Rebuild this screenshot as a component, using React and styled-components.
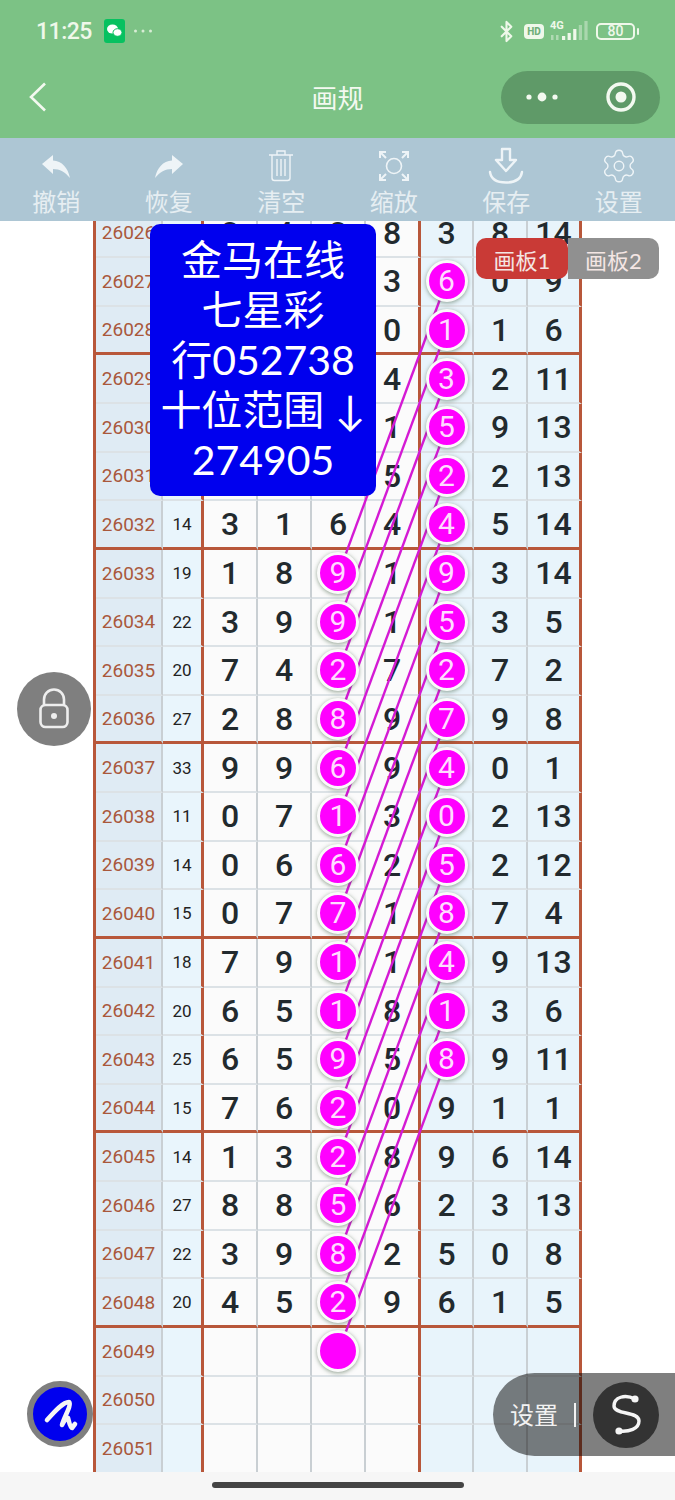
import React from "react";
import styled, { createGlobalStyle } from "styled-components";
import { Settings, Bluetooth } from "lucide-react";

const CJK = `"Noto Sans CJK SC", sans-serif`;
const NUM = `Roboto, "Noto Sans CJK SC", sans-serif`;
const ROW_H = 48.64;

const GlobalStyle = createGlobalStyle`
  html, body { margin: 0; padding: 0; background: #fff; }
  * { box-sizing: border-box; }
`;

const Page = styled.div`
  position: relative;
  width: 675px;
  height: 1500px;
  display: flex;
  flex-direction: column;
  overflow: hidden;
  background: #fff;
  font-family: ${CJK};
`;

/* ---- top bars ---- */
const Header = styled.header`
  background: #7cc285;
  height: 138px;
  flex: none;
`;

const StatusBar = styled.div`
  height: 62px;
  padding: 0 40px 0 36px;
  display: flex;
  align-items: center;
  justify-content: space-between;
  color: #eff8ea;
`;

const StatusGroup = styled.div`
  display: flex;
  align-items: center;
  gap: ${(p) => p.$gap || 8}px;
`;

const Time = styled.span`
  font: 500 23px ${NUM};
  letter-spacing: -0.5px;
  margin-right: 4px;
`;

const HdBadge = styled.span`
  width: 20px;
  height: 15px;
  border-radius: 4px;
  background: #eff8ea;
  color: #6fae79;
  font: 800 10px/15px ${NUM};
  text-align: center;
`;

const Signal = styled.span`
  position: relative;
  width: 40px;
  height: 20px;
  display: block;
`;

const SignalLabel = styled.span`
  position: absolute;
  left: 0;
  top: -1px;
  font: 700 11px/12px ${NUM};
`;

const Battery = styled.span`
  width: 39px;
  height: 17px;
  border: 2px solid #eff8ea;
  border-radius: 5px;
  font: 500 14px/13px ${NUM};
  text-align: center;
  position: relative;
  &::after {
    content: "";
    position: absolute;
    right: -6px;
    top: 3px;
    width: 2px;
    height: 7px;
    border-radius: 1px;
    background: #eff8ea;
  }
`;

const NavBar = styled.div`
  height: 76px;
  padding: 0 15px 6px;
  display: grid;
  grid-template-columns: 1fr auto 1fr;
  align-items: center;
`;

const BackArrow = styled.svg`
  margin-left: 14px;
`;

const Title = styled.div`
  color: #f3f9f0;
  font-size: 26px;
  line-height: 34px;
`;

const Capsule = styled.div`
  justify-self: end;
  width: 159px;
  height: 53px;
  padding: 0 24px;
  border-radius: 27px;
  background: #5f9a68;
  display: flex;
  align-items: center;
  justify-content: space-between;
`;

const Toolbar = styled.nav`
  height: 83px;
  flex: none;
  display: flex;
  background: #adc6d4;
`;

const ToolItem = styled.div`
  flex: 1;
  display: flex;
  flex-direction: column;
  align-items: center;
  padding-top: 7px;
`;

const ToolIcon = styled.div`
  height: 41px;
  display: flex;
  align-items: center;
  justify-content: center;
  color: #eef4f7;
  transform: ${(p) => (p.$flip ? "scaleX(-1)" : "none")};
`;

const ToolLabel = styled.div`
  color: #e6eef2;
  font-size: 24px;
  line-height: 30px;
`;

/* ---- board ---- */
const Board = styled.main`
  flex: 1;
  min-height: 0;
  overflow: hidden;
  padding-left: 93px;
`;

const Table = styled.div`
  position: relative;
  width: 489px;
  margin-top: -11.5px;
  border-left: 3px solid #b8573a;
`;

const Row = styled.div`
  display: grid;
  grid-template-columns: 67px 41px 54px 54px 54px 55px 53px 54px 54px;
  height: ${ROW_H}px;
`;

const CELL_BG = { id: "#dfebf4", sum: "#e9f5fc", plain: "#fbfbfb", tint: "#e8f4fb" };

const Cell = styled.div`
  display: flex;
  align-items: center;
  justify-content: center;
  min-width: 0;
  background: ${(p) => CELL_BG[p.$kind]};
  border-right: ${(p) => (p.$thick ? "3px solid #b8573a" : "2px solid #c9cfd3")};
  border-bottom: ${(p) => (p.$group ? "3px solid #b8573a" : "2px solid #dce2e6")};
`;

const RowId = styled.span`
  color: #a9583c;
  font: 400 19px ${NUM};
`;

const Sum = styled.span`
  color: #222;
  font: 400 17px ${NUM};
`;

const Digit = styled.span`
  color: #222a2e;
  font: 500 32px ${NUM};
`;

const Ball = styled.span`
  position: relative;
  z-index: 2;
  flex: none;
  width: 42px;
  height: 42px;
  border-radius: 50%;
  border: 3px solid #fafafa;
  background: #ff00ff;
  box-shadow: 0 1px 4px rgba(60, 90, 60, 0.55);
  color: #ffdcff;
  font: 400 30px/36px ${NUM};
  text-align: center;
`;

const Lines = styled.svg`
  position: absolute;
  left: 0;
  top: 0;
  z-index: 1;
  pointer-events: none;
`;

/* ---- floating parts ---- */
const InfoPanel = styled.div`
  position: absolute;
  z-index: 5;
  left: 150px;
  top: 224px;
  width: 226px;
  height: 272px;
  padding-top: 11px;
  border-radius: 10px;
  background: #0000ee;
  color: #fff;
  font: 400 41px/50px Lato, ${CJK};
  text-align: center;
  white-space: nowrap;
`;

const BoardTabs = styled.div`
  position: absolute;
  z-index: 5;
  left: 476px;
  top: 238px;
  display: flex;
`;

const BoardTab = styled.div`
  width: ${(p) => (p.$active ? 92 : 91)}px;
  height: 41px;
  padding-top: 2px;
  color: #f4e6e4;
  font: 400 22px/41px Lato, ${CJK};
  text-align: center;
  border-radius: ${(p) => (p.$active ? "10px" : "0 10px 10px 0")};
  background: ${(p) => (p.$active ? "#c93a36" : "#909090")};
`;

const LockButton = styled.div`
  position: absolute;
  z-index: 5;
  left: 17px;
  top: 672px;
  width: 74px;
  height: 74px;
  border-radius: 50%;
  background: rgba(0, 0, 0, 0.5);
`;

const PenButton = styled.div`
  position: absolute;
  z-index: 5;
  left: 27px;
  top: 1381px;
  width: 66px;
  height: 66px;
  border-radius: 50%;
  border: 6px solid #7f7f7f;
  background: #0000ee;
`;

const SettingsPill = styled.div`
  position: absolute;
  z-index: 5;
  right: 0;
  top: 1373px;
  width: 182px;
  height: 83px;
  padding-left: 17px;
  border-radius: 42px 0 0 42px;
  background: rgba(0, 0, 0, 0.5);
  display: flex;
  align-items: center;
  color: #f2f2f2;
  font-size: 24px;
`;

const PillLabel = styled.span`
  margin-bottom: 3px;
`;

const PillDivider = styled.span`
  width: 2px;
  height: 24px;
  margin: 0 17px 0 16px;
  background: #f2f2f2;
`;

const PillRound = styled.span`
  width: 66px;
  height: 66px;
  border-radius: 50%;
  background: #333;
`;

const BottomBar = styled.footer`
  height: 28px;
  flex: none;
  padding-top: 10px;
  background: #f6f6f6;
  display: flex;
  justify-content: center;
`;

const HomeIndicator = styled.span`
  width: 252px;
  height: 6px;
  border-radius: 3px;
  background: #444;
`;

/* ---- data ---- */
const ROWS = [
  [26026, "", "3", "4", "3", "8", "3", "8", "14"],
  [26027, "", "", "", "", "3", "6", "0", "9"],
  [26028, "", "", "", "", "0", "1", "1", "6"],
  [26029, "", "", "", "", "4", "3", "2", "11"],
  [26030, "", "", "", "", "1", "5", "9", "13"],
  [26031, "", "", "", "", "5", "2", "2", "13"],
  [26032, "14", "3", "1", "6", "4", "4", "5", "14"],
  [26033, "19", "1", "8", "9", "1", "9", "3", "14"],
  [26034, "22", "3", "9", "9", "1", "5", "3", "5"],
  [26035, "20", "7", "4", "2", "7", "2", "7", "2"],
  [26036, "27", "2", "8", "8", "9", "7", "9", "8"],
  [26037, "33", "9", "9", "6", "9", "4", "0", "1"],
  [26038, "11", "0", "7", "1", "3", "0", "2", "13"],
  [26039, "14", "0", "6", "6", "2", "5", "2", "12"],
  [26040, "15", "0", "7", "7", "1", "8", "7", "4"],
  [26041, "18", "7", "9", "1", "1", "4", "9", "13"],
  [26042, "20", "6", "5", "1", "8", "1", "3", "6"],
  [26043, "25", "6", "5", "9", "5", "8", "9", "11"],
  [26044, "15", "7", "6", "2", "0", "9", "1", "1"],
  [26045, "14", "1", "3", "2", "8", "9", "6", "14"],
  [26046, "27", "8", "8", "5", "6", "2", "3", "13"],
  [26047, "22", "3", "9", "8", "2", "5", "0", "8"],
  [26048, "20", "4", "5", "2", "9", "6", "1", "5"],
  [26049, "", "", "", "", "", "", "", ""],
  [26050, "", "", "", "", "", "", "", ""],
  [26051, "", "", "", "", "", "", "", ""],
];

const TOOLS = [
  { label: "撤销", icon: <UndoIcon /> },
  { label: "恢复", icon: <UndoIcon />, flip: true },
  { label: "清空", icon: <TrashIcon /> },
  { label: "缩放", icon: <ZoomIcon /> },
  { label: "保存", icon: <SaveIcon /> },
  { label: "设置", icon: <Settings size={38} strokeWidth={0.9} /> },
];

const hasBall = (id, col) =>
  (col === 2 && id >= 26033 && id <= 26049) || (col === 4 && id >= 26027 && id <= 26043);

/* ---- drawings ---- */
function UndoIcon() {
  return (
    <svg width="30" height="28" viewBox="0 0 30 28">
      <path d="M1 12 L12 3 V8.5 C21 9 27 16 29 26 C24 20 19 17 12 17 V22 Z" fill="currentColor" />
    </svg>
  );
}

function TrashIcon() {
  return (
    <svg width="28" height="33" viewBox="0 0 28 33" fill="none" stroke="currentColor" strokeWidth="1.4">
      <path d="M2 6 H26 M10 5.5 V2 H18 V5.5" />
      <path d="M5 6 V29 Q5 31.5 7.5 31.5 H20.5 Q23 31.5 23 29 V6" />
      <path d="M10 10 V27 M14 10 V27 M18 10 V27" />
    </svg>
  );
}

function ZoomIcon() {
  return (
    <svg width="30" height="30" viewBox="0 0 30 30" fill="none" stroke="currentColor" strokeWidth="2">
      <circle cx="15" cy="15" r="7.5" strokeWidth="1.6" />
      <path d="M1 7 V1 H7 M1 1 L7 7" />
      <path d="M29 7 V1 H23 M29 1 L23 7" />
      <path d="M1 23 V29 H7 M1 29 L7 23" />
      <path d="M29 23 V29 H23 M29 29 L23 23" />
    </svg>
  );
}

function SaveIcon() {
  return (
    <svg width="36" height="38" viewBox="0 0 36 38" fill="none" stroke="currentColor" strokeWidth="2.4">
      <path d="M14 2 H22 V13 H28 L18 24 L8 13 H14 Z" strokeLinejoin="round" />
      <path d="M2 25 C3 32 9 35.5 18 35.5 C27 35.5 33 32 34 25" strokeLinecap="round" />
    </svg>
  );
}

function WeChatIcon() {
  return (
    <svg width="21" height="24" viewBox="0 0 21 24">
      <rect width="21" height="24" rx="3" fill="#07c160" />
      <ellipse cx="8.5" cy="10" rx="5.5" ry="4.5" fill="#fff" />
      <ellipse cx="13.5" cy="13.5" rx="4.5" ry="3.8" fill="#fff" stroke="#07c160" strokeWidth="1" />
    </svg>
  );
}

function SignalBars() {
  const bars = [4, 7, 11, 15, 19];
  return (
    <svg width="40" height="20" viewBox="0 0 40 20">
      <rect x="1" y="14" width="2.5" height="5" fill="#eff8ea" opacity="0.45" />
      <rect x="6" y="14" width="2.5" height="5" fill="#eff8ea" opacity="0.45" />
      {bars.map((h, i) => (
        <rect key={i} x={12 + i * 5.6} y={19 - h} width="3.2" height={h} fill="#eff8ea" opacity={i < 3 ? 1 : 0.4} />
      ))}
    </svg>
  );
}

export default function App() {
  return (
    <Page>
      <GlobalStyle />
      <Header>
        <StatusBar>
          <StatusGroup $gap={8}>
            <Time>11:25</Time>
            <WeChatIcon />
            <svg width="20" height="6" viewBox="0 0 20 6" fill="#eff8ea" opacity="0.8">
              <circle cx="2.5" cy="3" r="1.5" />
              <circle cx="10" cy="3" r="1.5" />
              <circle cx="17.5" cy="3" r="1.5" />
            </svg>
          </StatusGroup>
          <StatusGroup $gap={6}>
            <Bluetooth size={23} strokeWidth={2.2} />
            <HdBadge>HD</HdBadge>
            <Signal>
              <SignalLabel>4G</SignalLabel>
              <SignalBars />
            </Signal>
            <Battery>80</Battery>
          </StatusGroup>
        </StatusBar>
        <NavBar>
          <BackArrow width="18" height="30" viewBox="0 0 18 30" fill="none" stroke="#f3f9f0" strokeWidth="2.6">
            <path d="M16 1.5 L2 15 L16 28.5" />
          </BackArrow>
          <Title>画规</Title>
          <Capsule>
            <svg width="34" height="12" viewBox="0 0 34 12" fill="#f3f9f0">
              <circle cx="4" cy="6" r="2.6" />
              <circle cx="17" cy="6" r="4.4" />
              <circle cx="30" cy="6" r="2.6" />
            </svg>
            <svg width="30" height="30" viewBox="0 0 30 30">
              <circle cx="15" cy="15" r="13" fill="none" stroke="#f3f9f0" strokeWidth="3.4" />
              <circle cx="15" cy="15" r="5.5" fill="#f3f9f0" />
            </svg>
          </Capsule>
        </NavBar>
      </Header>

      <Toolbar>
        {TOOLS.map((t) => (
          <ToolItem key={t.label}>
            <ToolIcon $flip={t.flip}>{t.icon}</ToolIcon>
            <ToolLabel>{t.label}</ToolLabel>
          </ToolItem>
        ))}
      </Toolbar>

      <Board>
        <Table>
          {ROWS.map(([id, sum, ...cells], r) => {
            const group = (r - 2) % 4 === 0 && r >= 2;
            return (
              <Row key={id}>
                <Cell $kind="id" $group={group}>
                  <RowId>{id}</RowId>
                </Cell>
                <Cell $kind="sum" $group={group} $thick>
                  <Sum>{sum}</Sum>
                </Cell>
                {cells.map((v, c) => (
                  <Cell key={c} $kind={c < 4 ? "plain" : "tint"} $group={group} $thick={c === 3 || c === 6}>
                    {hasBall(id, c) ? <Ball>{v}</Ball> : <Digit>{v}</Digit>}
                  </Cell>
                ))}
              </Row>
            );
          })}
          <Lines width="486" height={ROW_H * ROWS.length}>
            {ROWS.map(([id], r) =>
              hasBall(id, 4) ? (
                <line
                  key={id}
                  x1="350"
                  y1={ROW_H * (r + 0.5)}
                  x2="242"
                  y2={ROW_H * (r + 6.5)}
                  stroke="#d41ad4"
                  strokeWidth="2.4"
                />
              ) : null
            )}
          </Lines>
        </Table>
      </Board>

      <BottomBar>
        <HomeIndicator />
      </BottomBar>

      <InfoPanel>
        <div>金马在线</div>
        <div>七星彩</div>
        <div>行052738</div>
        <div>十位范围 ↓</div>
        <div>274905</div>
      </InfoPanel>

      <BoardTabs>
        <BoardTab $active>画板1</BoardTab>
        <BoardTab>画板2</BoardTab>
      </BoardTabs>

      <LockButton>
        <svg width="74" height="74" viewBox="0 0 74 74" fill="none" stroke="#eee" strokeWidth="2.6">
          <rect x="23.5" y="33" width="27" height="22" rx="5" />
          <path d="M27 33 V27.5 a10 10 0 0 1 20 0 V33" />
          <circle cx="37" cy="44" r="3" fill="#eee" stroke="none" />
        </svg>
      </LockButton>

      <PenButton>
        <svg width="54" height="54" viewBox="6 6 54 54" fill="none" stroke="#f5f5f5" strokeWidth="4.6" strokeLinecap="round" strokeLinejoin="round">
          <path d="M20 39 C28 30 36 21 42 21 C45 24 37 36 35 44 C37 40 40 36 41 37 C42 40 43 47 45 47 L48 43" />
        </svg>
      </PenButton>

      <SettingsPill>
        <PillLabel>设置</PillLabel>
        <PillDivider />
        <PillRound>
          <svg width="66" height="66" viewBox="0 0 66 66" fill="none" stroke="#f5f5f5" strokeWidth="3.4">
            <path d="M42 17 C32 12 21 15 21 24 C21 33 46 29 46 39 C46 47 36 50 26 49" />
            <circle cx="42" cy="17" r="3.6" fill="#f5f5f5" stroke="none" />
            <circle cx="26" cy="49" r="3.6" fill="#f5f5f5" stroke="none" />
          </svg>
        </PillRound>
      </SettingsPill>
    </Page>
  );
}
